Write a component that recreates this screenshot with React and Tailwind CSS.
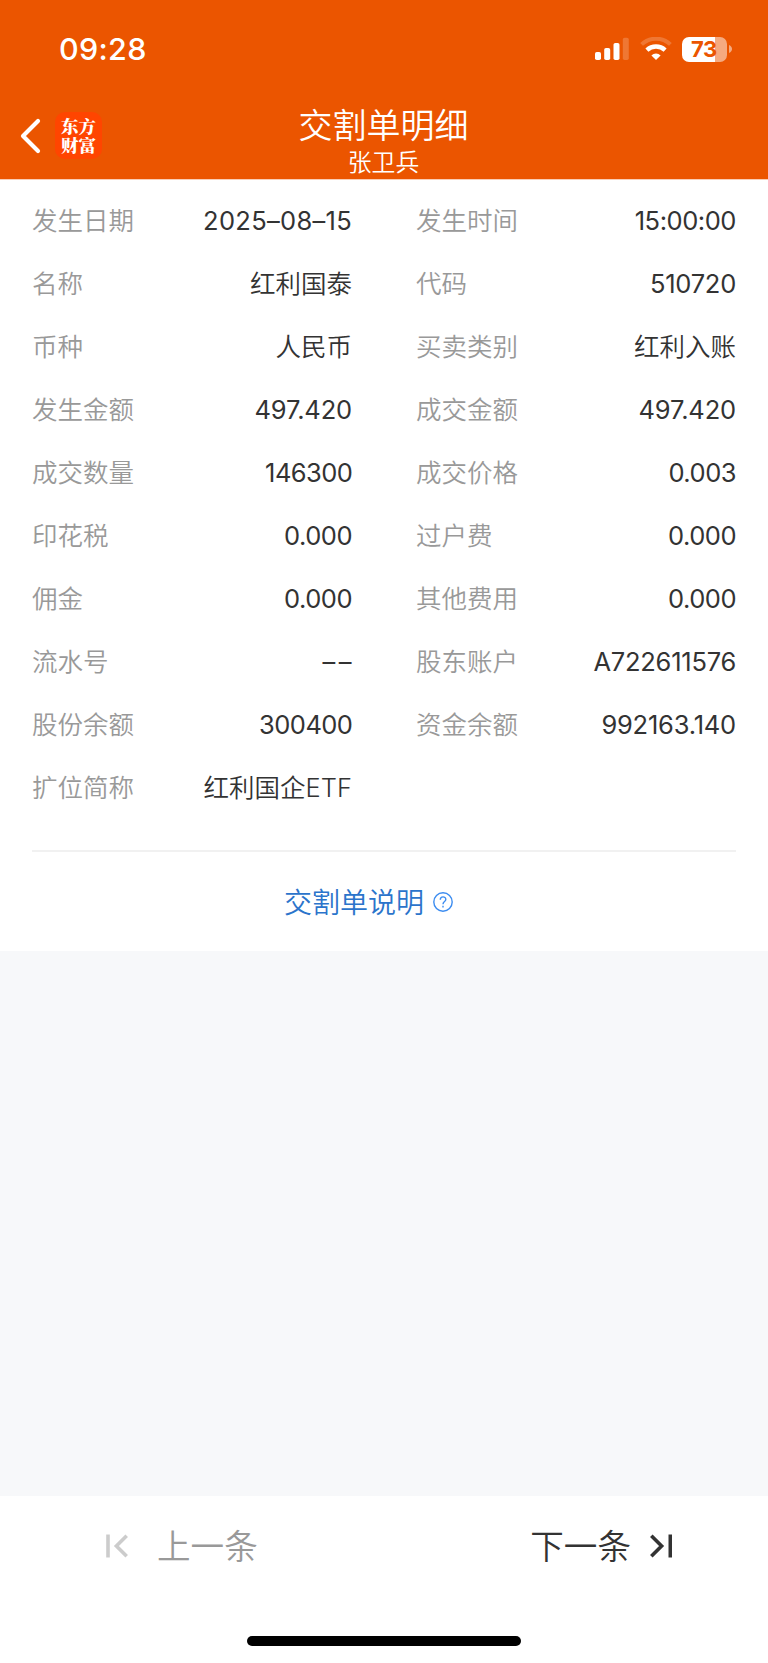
const cjk = "font-['Inter','Noto_Sans_CJK_SC',sans-serif]";

const CN = "font-[350]";
const INT = "font-[380] tracking-[-0.55px] -mr-[0.4px]";
const DEC = "font-[380] tracking-[-0.15px]";
const ZERO = "font-[380] tracking-[-0.5px]";
const rows = [
  ["发生日期", "2025–08–15", "发生时间", "15:00:00", "font-[380] tracking-[0.3px]", "font-[380] tracking-[-0.45px]"],
  ["名称", "红利国泰", "代码", "510720", CN, "font-[380] tracking-[-0.25px]"],
  ["币种", "人民币", "买卖类别", "红利入账", CN, CN],
  ["发生金额", "497.420", "成交金额", "497.420", DEC, DEC],
  ["成交数量", "146300", "成交价格", "0.003", INT, ZERO],
  ["印花税", "0.000", "过户费", "0.000", ZERO, ZERO],
  ["佣金", "0.000", "其他费用", "0.000", ZERO, ZERO],
  ["流水号", "––", "股东账户", "A722611576", "font-[380] tracking-[3.5px] -mr-[3px]", "font-[380] tracking-[-0.25px]"],
  ["股份余额", "300400", "资金余额", "992163.140", INT, "font-[380] tracking-[-0.2px]"],
  ["扩位简称", "红利国企ETF", "", "", CN, CN],
];

function Signal() {
  return (
    <svg width="34" height="24" viewBox="0 0 34 24" fill="#fff">
      <rect x="0" y="15" width="6" height="8" rx="1.8" />
      <rect x="9.2" y="11" width="6" height="12" rx="1.8" />
      <rect x="18.5" y="6" width="6" height="17" rx="1.8" />
      <rect x="27.8" y="0.8" width="6" height="22.2" rx="1.8" opacity="0.2" />
    </svg>
  );
}

function Wifi() {
  return (
    <svg width="32" height="24" viewBox="0 0 32 24" fill="none" stroke="#fff">
      <path d="M1.6 7.4A21 21 0 0 1 30.4 7.4" strokeWidth="4" opacity="0.2" />
      <path d="M6.9 13.1A13.4 13.4 0 0 1 25.1 13.1" strokeWidth="4.4" />
      <path d="M16 23L11.4 18.4A6.6 6.6 0 0 1 20.6 18.4Z" fill="#fff" stroke="none" />
    </svg>
  );
}

function Battery() {
  return (
    <div className="flex items-center">
      <div className="flex h-[25px] w-[45px] items-center justify-center rounded-[7px] bg-[linear-gradient(90deg,#fff_73%,#f5aa80_73%)] pr-px text-[22px] font-bold leading-none tracking-[-0.3px] text-[#eb5500]">
        73
      </div>
      <svg className="ml-[2px]" width="3" height="8" viewBox="0 0 3 8">
        <path d="M0 0C4 1.5 4 6.5 0 8Z" fill="#f5aa80" />
      </svg>
    </div>
  );
}

function Cell({ label, value, fit }) {
  return (
    <div className="flex h-[63px] items-center justify-between">
      <span className="text-[#999]">{label}</span>
      <span className={`text-[#333] ${fit}`}>{value}</span>
    </div>
  );
}

export default function App() {
  return (
    <div className={`${cjk} flex h-[1663px] w-[768px] flex-col bg-white text-[#333]`}>
      <header className="flex h-[180px] flex-col border-b border-[#f9cdb5] bg-[#eb5500] text-white">
        <div className="flex h-[98px] items-center justify-between pl-[59px] pr-[36px]">
          <span className="text-[30.5px] font-medium leading-none tracking-[0.3px]">09:28</span>
          <div className="flex items-center">
            <Signal />
            <span className="w-[11px]" />
            <Wifi />
            <span className="w-[10px]" />
            <Battery />
          </div>
        </div>
        <div className="flex h-[81px] items-start">
          <div className="flex w-[200px] items-center pl-[20px] pt-[14px]">
            <svg width="22" height="36" viewBox="0 0 22 36" fill="none" stroke="#fff" strokeWidth="4.2" strokeLinecap="round" strokeLinejoin="round">
              <path d="M18 3L3 18L18 33" />
            </svg>
            <div className="ml-[13px] flex h-[47px] w-[47px] items-center justify-center rounded-[10px] bg-[#ff4500] pb-px font-['Noto_Serif_CJK_SC','Noto_Sans_CJK_SC',sans-serif] text-[17.5px] font-black leading-[19.5px]">
              <p>
                东方
                <br />
                财富
              </p>
            </div>
          </div>
          <div className="flex w-[368px] flex-col items-center pr-px pt-[8px]">
            <h1 className="text-[34px] font-[350] leading-[40px]">交割单明细</h1>
            <p className="mt-[2px] text-[23.8px] font-[350] leading-[30px]">张卫兵</p>
          </div>
        </div>
      </header>
      <main className="flex flex-col pt-[9px]">
        <div className="grid grid-cols-2 gap-x-[64px] px-[32px] text-[25.5px] font-[350] leading-none">
          {rows.flatMap(([a, b, c, d, fitB, fitD], i) => [
            <Cell key={`l${i}`} label={a} value={b} fit={fitB} />,
            <Cell key={`r${i}`} label={c} value={d} fit={fitD} />,
          ])}
        </div>
        <div className="mx-[32px] mt-[31px] h-[2px] bg-[#f1f1f1]" />
        <div className="flex h-[99px] items-center pl-[284px] text-[#2b74cb]">
          <span className="pt-[2px] text-[28px] font-[350] leading-none">交割单说明</span>
          <svg className="ml-[9px]" width="20" height="20" viewBox="0 0 20 20" fill="none" stroke="#3c8cf0" strokeWidth="1.4">
            <circle cx="10" cy="10" r="9.2" />
            <path d="M7.3 7.8C7.3 3.9 12.8 4.1 12.8 7.5C12.8 9.4 10 9.8 10 12.2" />
            <path d="M10 13.8V15.4" />
          </svg>
        </div>
      </main>
      <div className="flex-1 bg-[#f7f8fa]" />
      <footer className="flex h-[167px] flex-col items-center">
        <div className="flex h-[99px] w-full items-center justify-between pl-[105px] pr-[96px] text-[33.6px] font-[350] leading-none">
          <div className="flex items-center text-[#999]">
            <svg width="23" height="24" viewBox="0 0 23 24" fill="none" stroke="#ccc" strokeWidth="3.6">
              <path d="M3 0.5V23.5" />
              <path d="M21.7 1.7L11.4 12L21.7 22.3" />
            </svg>
            <span className="ml-[29px] pt-[3px]">上一条</span>
          </div>
          <div className="flex items-center">
            <span className="pt-[3px]">下一条</span>
            <svg className="ml-[18px]" width="23" height="24" viewBox="0 0 23 24" fill="none" stroke="#333" strokeWidth="3.6">
              <path d="M21.3 0.5V23.5" />
              <path d="M2.3 1.7L12.6 12L2.3 22.3" />
            </svg>
          </div>
        </div>
        <div className="mt-[41px] h-[10px] w-[274px] rounded-full bg-black" />
      </footer>
    </div>
  );
}
